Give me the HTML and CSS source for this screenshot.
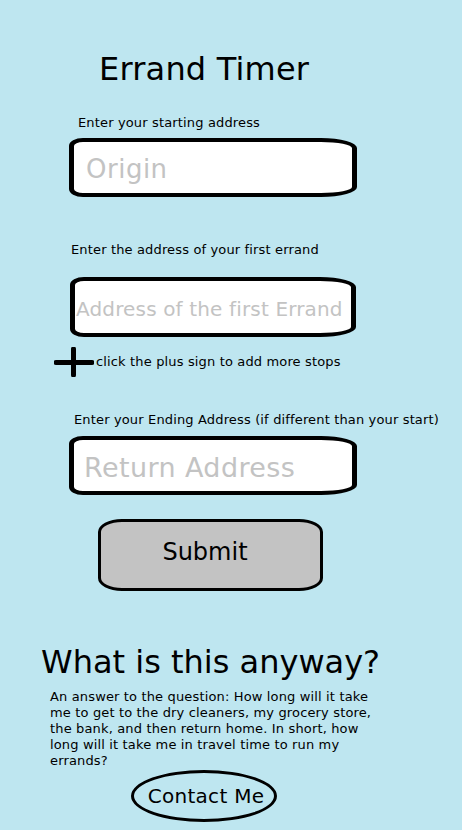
FILE: index.html
```html
<!DOCTYPE html>
<html lang="en">
<head>
<meta charset="utf-8">
<title>Errand Timer</title>
<link rel="stylesheet" href="styles.css">
</head>
<body>
<main class="page">
  <h1 class="title">Errand Timer</h1>
  <form class="errand-form">
    <label class="label label-start" for="origin">Enter your starting address</label>
    <input class="field field-origin" id="origin" type="text" placeholder="Origin">

    <label class="label label-first" for="first">Enter the address of your first errand</label>
    <input class="field field-first" id="first" type="text" placeholder="Address of the first Errand">

    <div class="add-row">
      <svg class="plus" width="40" height="30" viewBox="0 0 40 30" aria-hidden="true">
        <path d="M2 15.5 H38 M19.5 2 V28" stroke="#000" stroke-width="5" stroke-linecap="round" fill="none"/>
      </svg>
      <span class="add-text">click the plus sign to add more stops</span>
    </div>

    <label class="label label-end" for="ret">Enter your Ending Address (if different than your start)</label>
    <input class="field field-return" id="ret" type="text" placeholder="Return Address">

    <button class="submit" type="button">Submit</button>
  </form>

  <h2 class="about-title">What is this anyway?</h2>
  <p class="about-text">An answer to the question: How long will it take me to get to the dry cleaners, my grocery store, the bank, and then return home. In short, how long will it take me in travel time to run my errands?</p>
  <a class="contact" href="#">Contact Me</a>
</main>
</body>
</html>
```

FILE: styles.css
```css
html, body {
  margin: 0;
  padding: 0;
  background: #bee6f0;
}

.page {
  padding-top: 50px;
  font-family: "DejaVu Sans", Verdana, sans-serif;
  color: #000;
}

.title {
  margin: 0 0 0 99px;
  font-size: 32px;
  line-height: 38px;
  font-weight: normal;
  letter-spacing: 0.2px;
}

.errand-form {
  display: flex;
  flex-direction: column;
  align-items: flex-start;
}

.label {
  display: block;
  font-size: 13px;
  line-height: 16px;
  letter-spacing: 0.15px;
}

.label-start { margin: 27px 0 0 78px; }
.label-first { margin: 45px 0 0 71px; }
.label-end { margin: 35px 0 0 74px; }

.field {
  display: block;
  box-sizing: border-box;
  background: #fff;
  border: solid #000;
  border-width: 4px 5px;
  border-radius: 14px 36px 36px 14px / 8px 10px 10px 8px;
  font-family: "DejaVu Sans", Verdana, sans-serif;
  color: #000;
  outline: none;
}

.field::placeholder {
  color: #c3c3c3;
  opacity: 1;
}

.field-origin {
  margin: 7px 0 0 69px;
  width: 288px;
  height: 59px;
  padding: 3px 0 0 12px;
  font-size: 26px;
  letter-spacing: 0.5px;
}

.field-first {
  margin: 19px 0 0 70px;
  width: 286px;
  height: 60px;
  padding: 3px 0 0 1px;
  font-size: 20px;
  letter-spacing: 0.15px;
}

.field-return {
  margin: 8px 0 0 69px;
  width: 288px;
  height: 59px;
  padding: 3px 0 0 10px;
  font-size: 27px;
  letter-spacing: 0.4px;
}

.add-row {
  display: flex;
  align-items: center;
  gap: 2px;
  margin: 10px 0 0 54px;
  height: 30px;
}

.plus { display: block; }

.add-text {
  font-size: 13px;
  line-height: 16px;
  letter-spacing: 0.15px;
}

.submit {
  display: block;
  box-sizing: border-box;
  margin: 24px 0 0 98px;
  width: 225px;
  height: 72px;
  padding: 0 11px 6px 0;
  background: #c3c3c3;
  border: 3px solid #000;
  border-radius: 24px / 13px;
  font-family: "DejaVu Sans", Verdana, sans-serif;
  font-size: 24px;
  color: #000;
}

.about-title {
  margin: 53px 0 0 41px;
  font-size: 32px;
  line-height: 36px;
  font-weight: normal;
}

.about-text {
  margin: 9px 0 0 50px;
  width: 328px;
  font-size: 13px;
  line-height: 16px;
  letter-spacing: 0.15px;
}

.contact {
  display: flex;
  align-items: center;
  justify-content: center;
  box-sizing: border-box;
  margin: 1px 0 0 131px;
  width: 146px;
  height: 52px;
  padding-left: 4px;
  border: 3px solid #000;
  border-radius: 50%;
  font-size: 20px;
  letter-spacing: 0.3px;
  color: #000;
  text-decoration: none;
}
```
